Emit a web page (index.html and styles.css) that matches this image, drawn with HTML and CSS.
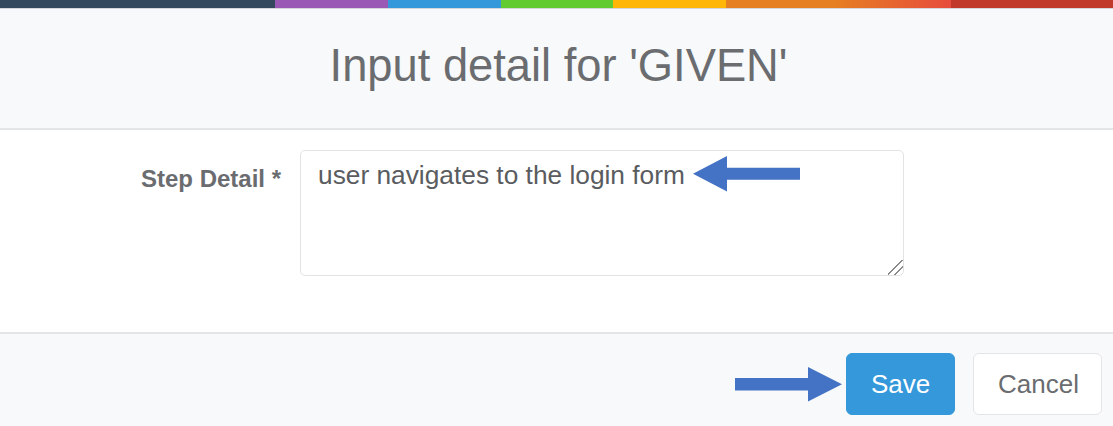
FILE: index.html
```html
<!DOCTYPE html>
<html lang="en">
<head>
<meta charset="utf-8">
<title>Input detail</title>
<link rel="stylesheet" href="styles.css">
</head>
<body>
<div class="modal">
  <div class="color-line"></div>
  <div class="modal-header">
    <h3 class="modal-title">Input detail for 'GIVEN'</h3>
  </div>
  <div class="modal-body">
    <div class="form-row">
      <label class="form-label" for="step">Step Detail *</label>
      <div class="field">
        <textarea id="step" class="form-control">user navigates to the login form</textarea>
        <svg class="arrow arrow-left" width="108" height="36" viewBox="0 0 108 36" aria-hidden="true">
          <polygon points="0,17.8 34,0 34,11.8 107,11.8 107,23.8 34,23.8 34,35.5" fill="#4472c4"/>
        </svg>
      </div>
    </div>
  </div>
  <div class="modal-footer">
    <svg class="arrow arrow-right" width="108" height="35" viewBox="0 0 108 35" aria-hidden="true">
      <polygon points="107,17.2 73,0 73,11 0,11 0,23.4 73,23.4 73,34.4" fill="#4472c4"/>
    </svg>
    <button class="btn btn-primary" type="button">Save</button>
    <button class="btn btn-default" type="button">Cancel</button>
  </div>
</div>
</body>
</html>
```

FILE: styles.css
```css
html, body {
  margin: 0;
  padding: 0;
  height: 100%;
}

body {
  font-family: "Liberation Sans", Arial, sans-serif;
  color: #6a6c6f;
  background: #ffffff;
}

.modal {
  display: flex;
  flex-direction: column;
  min-height: 100%;
}

.color-line {
  height: 8px;
  border-bottom: 1px solid #d3d7db;
  background: linear-gradient(to right,
    #34495e, #34495e 24.7%,
    #9b59b6 24.7%, #9b59b6 34.9%,
    #3498db 34.9%, #3498db 45%,
    #62cb31 45%, #62cb31 55.1%,
    #ffb606 55.1%, #ffb606 65.2%,
    #e67e22 65.2%, #e67e22 75%,
    #e74c3c 85.4%, #c0392b 85.4%, #c0392b 100%);
}

.modal-header {
  background: #f7f9fa;
  border-bottom: 2px solid #e4e5e7;
  padding: 32px 0 37px;
  text-align: center;
}

.modal-title {
  margin: 0;
  font-size: 45.3px;
  line-height: 50px;
  font-weight: 400;
  color: #6a6c6f;
  padding-left: 4px;
}

.modal-body {
  background: #ffffff;
  padding: 20px 0 56px;
}

.form-row {
  display: grid;
  grid-template-columns: 281px 604px;
  column-gap: 19px;
  align-items: start;
}

.form-label {
  text-align: right;
  font-size: 24px;
  line-height: 30px;
  font-weight: 700;
  padding-top: 14px;
  color: #6a6c6f;
}

.field {
  position: relative;
}

.form-control {
  display: block;
  box-sizing: border-box;
  width: 604px;
  height: 126px;
  margin: 0;
  padding: 7px 16px 7px 17px;
  border: 1px solid #e2e3e5;
  border-radius: 5px;
  font-family: "Liberation Sans", Arial, sans-serif;
  font-size: 26.3px;
  line-height: 34px;
  color: #5a5c5f;
  background: #ffffff;
  resize: vertical;
  outline: none;
}

.form-control::-webkit-resizer {
  background:
    linear-gradient(135deg,
      transparent 0, transparent 44%,
      #8a8a8a 44%, #8a8a8a 51%,
      transparent 51%, transparent 68%,
      #8a8a8a 68%, #8a8a8a 75%,
      transparent 75%);
}

.arrow {
  display: block;
  flex: none;
}

.arrow-left {
  position: absolute;
  left: 393px;
  top: 5.5px;
}

.modal-footer {
  flex: 1;
  background: #f7f9fa;
  border-top: 2px solid #e4e5e7;
  display: flex;
  justify-content: flex-end;
  align-items: flex-start;
  padding: 19px 11px 0 0;
}

.arrow-right {
  margin-top: 14px;
  margin-right: 3px;
}

.btn {
  box-sizing: border-box;
  height: 62px;
  padding: 0 24px;
  font-family: "Liberation Sans", Arial, sans-serif;
  font-size: 26px;
  line-height: 60px;
  border-radius: 6px;
  cursor: pointer;
}

.btn-primary {
  background: #3498db;
  border: 1px solid #3498db;
  color: #ffffff;
  width: 109px;
}

.btn-default {
  background: #ffffff;
  border: 1px solid #e4e5e7;
  color: #6a6c6f;
  width: 129px;
  margin-left: 18px;
}
```
